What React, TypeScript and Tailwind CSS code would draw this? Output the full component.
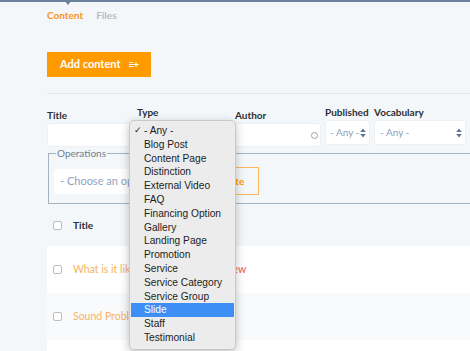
import React from "react";

const typeOptions = [
  "- Any -",
  "Blog Post",
  "Content Page",
  "Distinction",
  "External Video",
  "FAQ",
  "Financing Option",
  "Gallery",
  "Landing Page",
  "Promotion",
  "Service",
  "Service Category",
  "Service Group",
  "Slide",
  "Staff",
  "Testimonial",
];

const Arrows = () => (
  <svg width="6" height="10" viewBox="0 0 6 10" className="shrink-0">
    <path d="M3 0.5 L5.8 4 L0.2 4 Z" fill="#5e7591" />
    <path d="M3 9.5 L5.8 6 L0.2 6 Z" fill="#5e7591" />
  </svg>
);

const Checkbox = () => (
  <div className="w-[9px] h-[9px] rounded-[2px] border border-[#b9bec4] bg-white shrink-0" />
);

const Row = ({ title, bg, tag }: { title: string; bg: string; tag?: string }) => (
  <div className={`flex items-center h-[47px] pl-[6px] ${bg}`}>
    <Checkbox />
    <span className="ml-[11px] w-[140px] text-[10.5px] text-[#f7b45a] whitespace-nowrap overflow-hidden">
      {title}
    </span>
    {tag && <span className="text-[10.5px] text-[#ec5a5e]">{tag}</span>}
  </div>
);

export default function App() {
  return (
    <div className="relative w-[470px] h-[351px] overflow-hidden bg-[#f4f7fa] font-['Lato',sans-serif] text-[#2c2f33]">
      {/* top bar */}
      <div className="h-[2px] bg-[#6a819e]" />
      <div className="absolute left-[64px] top-0 w-0 h-0 border-l-[4px] border-r-[4px] border-t-[5px] border-l-transparent border-r-transparent border-t-[#6a819e]" />

      <div className="pl-[47px]">
        {/* tabs */}
        <div className="flex gap-[13px] pt-[7px] h-[20px] text-[10px] font-bold leading-[12px]">
          <span className="text-[#f7941d]">Content</span>
          <span className="text-[#b6bcc3]">Files</span>
        </div>

        {/* add content */}
        <button className="mt-[30px] w-[104px] h-[25px] bg-[#ff9a00] text-white text-[11px] font-bold flex items-center pl-[13px] gap-[8px]">
          <span>Add content</span>
          <span className="text-[10px] tracking-[-1px]">≡+</span>
        </button>

        <div className="mt-[16px] h-px bg-[#e4e9ee]" />

        {/* filters */}
        <div className="flex mt-[12px] text-[10px]">
          <div className="w-[88px] pt-[3px] mr-[2px]">
            <div className="h-[12px] leading-[12px] font-bold">Title</div>
            <div className="mt-[2px] h-[24px] bg-white rounded-[3px] border border-[#eef1f4]" />
          </div>
          <div className="w-[95px] mr-[3px]">
            <div className="h-[12px] leading-[12px] font-bold">Type</div>
            <div className="mt-[2px] h-[25px] bg-white rounded-[3px] border-2 border-[#6aa6f0]" />
          </div>
          <div className="w-[86px] pt-[3px] mr-[4px]">
            <div className="h-[12px] leading-[12px] font-bold">Author</div>
            <div className="mt-[2px] h-[24px] bg-white rounded-[3px] border border-[#eef1f4] flex items-center justify-end pr-[2px]">
              <div className="w-[7px] h-[7px] rounded-full border border-[#9aa2aa]" />
            </div>
          </div>
          <div className="w-[45px] mr-[4px]">
            <div className="h-[12px] leading-[12px] font-bold">Published</div>
            <div className="mt-[2px] h-[25px] bg-white rounded-[3px] border border-[#eef1f4] flex items-center justify-between pl-[4px] pr-[3px] text-[#8aa0bd]">
              <span>- Any -</span>
              <Arrows />
            </div>
          </div>
          <div className="w-[92px]">
            <div className="h-[12px] leading-[12px] font-bold">Vocabulary</div>
            <div className="mt-[2px] h-[25px] bg-white rounded-[3px] border border-[#eef1f4] flex items-center justify-between pl-[5px] pr-[3px] text-[#8aa0bd]">
              <span>- Any -</span>
              <Arrows />
            </div>
          </div>
        </div>

        {/* operations */}
        <fieldset className="ml-px w-[470px] min-w-[470px] border border-[#a3b3c0] pl-[5px] pr-[5px] pb-[8px]">
          <legend className="ml-[2px] px-[1px] text-[10px] leading-[12px] text-[#6e7f8e]">Operations</legend>
          <div className="flex items-center gap-[4px] mt-[8px]">
            <div className="w-[136px] h-[25px] bg-white rounded-[3px] flex items-center pl-[6px] text-[11px] text-[#8ea3c0] whitespace-nowrap overflow-hidden">
              - Choose an operation -
            </div>
            <button className="w-[65px] h-[28px] border border-[#fbb95a] text-[#ff9a00] text-[10px] font-bold">
              Execute
            </button>
          </div>
        </fieldset>

        {/* table */}
        <div className="mt-px w-[430px]">
          <div className="flex items-center h-[41px] pl-[6px]">
            <Checkbox />
            <span className="ml-[11px] text-[10px] font-bold">Title</span>
          </div>
          <Row title="What is it like to have a cochlear implant" bg="bg-white" tag="Review" />
          <Row title="Sound Problems and Hearing Loss" bg="bg-[#f8fafc]" />
          <div className="h-[47px] bg-white" />
        </div>
      </div>

      {/* native select popup */}
      <div className="absolute left-[129px] top-[120px] w-[107px] h-[230px] rounded-[5px] bg-[#ececec] border border-[#c9c9c9] shadow-[0_3px_10px_rgba(0,0,0,0.25)] pt-[3px] font-['Liberation_Sans',sans-serif] text-[10.2px] text-[#1d1d1d]">
        {typeOptions.map((o, i) => (
          <div
            key={o}
            className={`relative h-[13.8px] leading-[13.8px] pl-[13px] mx-px ${o === "Slide" ? "bg-[#3d8ff6] text-white" : ""}`}
          >
            {i === 0 && <span className="absolute left-[3px] top-0 text-[9px]">✓</span>}
            {o}
          </div>
        ))}
      </div>
    </div>
  );
}
